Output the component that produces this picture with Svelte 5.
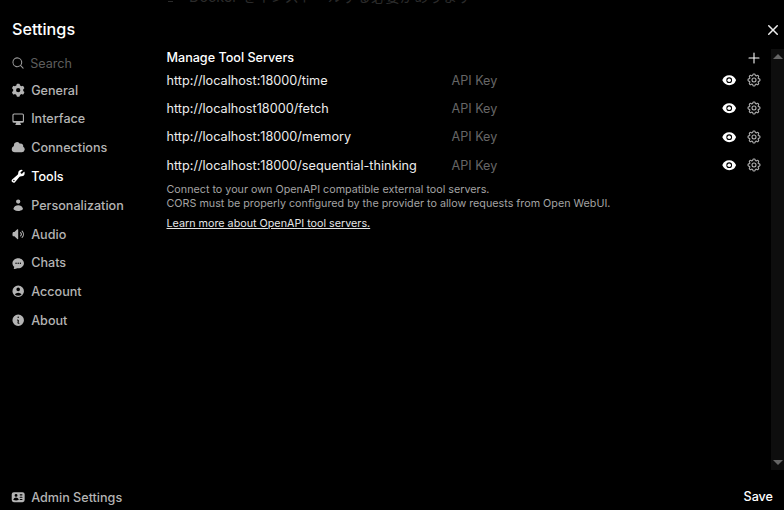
<script>
	const gear = 'M7.84 1.804A1 1 0 0 1 8.82 1h2.36a1 1 0 0 1 .98.804l.331 1.652a6.993 6.993 0 0 1 1.929 1.115l1.598-.54a1 1 0 0 1 1.186.447l1.18 2.044a1 1 0 0 1-.205 1.251l-1.267 1.113a7.047 7.047 0 0 1 0 2.228l1.267 1.113a1 1 0 0 1 .206 1.25l-1.18 2.045a1 1 0 0 1-1.187.447l-1.598-.54a6.993 6.993 0 0 1-1.929 1.115l-.33 1.652a1 1 0 0 1-.98.804H8.82a1 1 0 0 1-.98-.804l-.331-1.652a6.993 6.993 0 0 1-1.929-1.115l-1.598.54a1 1 0 0 1-1.186-.447l-1.18-2.044a1 1 0 0 1 .205-1.251l1.267-1.114a7.05 7.05 0 0 1 0-2.227L1.821 7.773a1 1 0 0 1-.206-1.25l1.18-2.045a1 1 0 0 1 1.187-.447l1.598.54A6.992 6.992 0 0 1 7.51 3.456l.33-1.652ZM10 13a3 3 0 1 0 0-6 3 3 0 0 0 0 6Z';

	const tabs = [
		{ label: 'General', d: gear },
		{ label: 'Interface', d: 'M2 4.25A2.25 2.25 0 0 1 4.25 2h11.5A2.25 2.25 0 0 1 18 4.25v8.5A2.25 2.25 0 0 1 15.75 15h-3.105a3.501 3.501 0 0 0 1.1 1.677A.75.75 0 0 1 13.26 18H6.74a.75.75 0 0 1-.484-1.323A3.501 3.501 0 0 0 7.355 15H4.25A2.25 2.25 0 0 1 2 12.75v-8.5Zm1.5 0a.75.75 0 0 1 .75-.75h11.5a.75.75 0 0 1 .75.75v7.5a.75.75 0 0 1-.75.75H4.25a.75.75 0 0 1-.75-.75v-7.5Z' },
		{ label: 'Connections', d: 'M1 12.5A4.5 4.5 0 0 0 5.5 17H15a4 4 0 0 0 1.866-7.539 3.504 3.504 0 0 0-4.504-4.272A4.5 4.5 0 0 0 4.06 8.235 4.502 4.502 0 0 0 1 12.5Z' },
		{ label: 'Tools', active: true, d: 'M19 5.5a4.5 4.5 0 0 1-4.791 4.49c-.873-.055-1.808.128-2.368.8l-6.024 7.23a2.724 2.724 0 1 1-3.837-3.837L9.21 8.16c.672-.56.855-1.495.8-2.368a4.5 4.5 0 0 1 5.873-4.575c.324.105.39.51.15.752L13.34 4.66a.455.455 0 0 0-.11.494 3.01 3.01 0 0 0 1.617 1.617c.17.07.363.02.493-.111l2.692-2.692c.241-.241.647-.174.752.15.14.435.216.9.216 1.382ZM4 17a1 1 0 1 0 0-2 1 1 0 0 0 0 2Z' },
		{ label: 'Personalization', d: 'M10 8a3 3 0 1 0 0-6 3 3 0 0 0 0 6ZM3.465 14.493a1.23 1.23 0 0 0 .41 1.412A9.957 9.957 0 0 0 10 18c2.31 0 4.438-.784 6.125-2.095a1.23 1.23 0 0 0 .41-1.412A7 7 0 0 0 10 10a7 7 0 0 0-6.535 4.493Z' },
		{ label: 'Audio', d: 'M10 3.75a.75.75 0 0 0-1.264-.546L4.703 7H3.167a.75.75 0 0 0-.7.48A6.985 6.985 0 0 0 2 10c0 .887.165 1.737.468 2.52.111.29.39.48.7.48h1.535l4.033 3.796A.75.75 0 0 0 10 16.25V3.75ZM15.95 5.05a.75.75 0 0 0-1.06 1.061 5.5 5.5 0 0 1 0 7.778.75.75 0 0 0 1.06 1.06 7 7 0 0 0 0-9.899ZM13.829 7.172a.75.75 0 0 0-1.061 1.06 2.5 2.5 0 0 1 0 3.536.75.75 0 0 0 1.06 1.06 4 4 0 0 0 0-5.656Z' },
		{ label: 'Chats', d: 'M10 3c-4.31 0-8 3.033-8 7 0 2.024.978 3.825 2.499 5.085a3.478 3.478 0 0 1-.522 1.756.75.75 0 0 0 .584 1.143 5.976 5.976 0 0 0 3.936-1.108c.487.082.99.124 1.503.124 4.31 0 8-3.033 8-7s-3.69-7-8-7Zm0 8a1 1 0 1 0 0-2 1 1 0 0 0 0 2Zm-2-1a1 1 0 1 1-2 0 1 1 0 0 1 2 0Zm5 1a1 1 0 1 0 0-2 1 1 0 0 0 0 2Z' },
		{ label: 'Account', d: 'M18 10a8 8 0 1 1-16 0 8 8 0 0 1 16 0Zm-5.5-2.5a2.5 2.5 0 1 1-5 0 2.5 2.5 0 0 1 5 0ZM10 12a5.99 5.99 0 0 0-4.793 2.39A6.483 6.483 0 0 0 10 16.5a6.483 6.483 0 0 0 4.793-2.11A5.99 5.99 0 0 0 10 12Z' },
		{ label: 'About', d: 'M18 10a8 8 0 1 1-16 0 8 8 0 0 1 16 0Zm-7-4a1 1 0 1 1-2 0 1 1 0 0 1 2 0ZM9 9a.75.75 0 0 0 0 1.5h.253a.25.25 0 0 1 .244.304l-.459 2.066A1.75 1.75 0 0 0 10.747 15H11a.75.75 0 0 0 0-1.5h-.253a.25.25 0 0 1-.244-.304l.459-2.066A1.75 1.75 0 0 0 9.253 9H9Z' }
	];

	const admin = 'M1 6a3 3 0 0 1 3-3h12a3 3 0 0 1 3 3v8a3 3 0 0 1-3 3H4a3 3 0 0 1-3-3V6Zm4 1.5a2 2 0 1 1 4 0 2 2 0 0 1-4 0Zm2 3a4 4 0 0 0-3.665 2.395.75.75 0 0 0 .416 1A8.98 8.98 0 0 0 7 14.5a8.98 8.98 0 0 0 3.249-.604.75.75 0 0 0 .416-1.001A4.001 4.001 0 0 0 7 10.5Zm5-3.75a.75.75 0 0 1 .75-.75h2.5a.75.75 0 0 1 0 1.5h-2.5a.75.75 0 0 1-.75-.75Zm0 6.5a.75.75 0 0 1 .75-.75h2.5a.75.75 0 0 1 0 1.5h-2.5a.75.75 0 0 1-.75-.75Zm.75-4a.75.75 0 0 0 0 1.5h2.5a.75.75 0 0 0 0-1.5h-2.5Z';

	const servers = [
		'http://localhost:18000/time',
		'http://localhost18000/fetch',
		'http://localhost:18000/memory',
		'http://localhost:18000/sequential-thinking'
	];
</script>

<div class="modal">
	<!-- page behind the modal, barely visible at the top edge -->
	<div class="behind"><span></span>Docker をインストールする必要があります</div>

	<header>
		<h1>Settings</h1>
		<button class="close" aria-label="Close">
			<svg viewBox="0 0 20 20" width="20" height="20" fill="currentColor"><path d="M6.28 5.22a.75.75 0 0 0-1.06 1.06L8.94 10l-3.72 3.72a.75.75 0 1 0 1.06 1.06L10 11.06l3.72 3.72a.75.75 0 1 0 1.06-1.06L11.06 10l3.72-3.72a.75.75 0 0 0-1.06-1.06L10 8.94 6.28 5.22Z" /></svg>
		</button>
	</header>

	<div class="body">
		<aside>
			<div>
				<div class="search">
					<svg viewBox="0 0 20 20" width="14" height="14" fill="currentColor"><path fill-rule="evenodd" clip-rule="evenodd" d="M9 3.5a5.5 5.5 0 1 0 0 11 5.5 5.5 0 0 0 0-11ZM2 9a7 7 0 1 1 12.452 4.391l3.328 3.329a.75.75 0 1 1-1.06 1.06l-3.329-3.328A7 7 0 0 1 2 9Z" /></svg>
					<span>Search</span>
				</div>
				<nav>
					{#each tabs as tab}
						<button class="tab" class:active={tab.active}>
							<svg viewBox="0 0 20 20" width="14.4" height="14.4" fill="currentColor"><path fill-rule="evenodd" clip-rule="evenodd" d={tab.d} /></svg>
							{tab.label}
						</button>
					{/each}
				</nav>
			</div>
			<button class="tab admin">
				<svg viewBox="0 0 20 20" width="14.4" height="14.4" fill="currentColor"><path fill-rule="evenodd" clip-rule="evenodd" d={admin} /></svg>
				Admin Settings
			</button>
		</aside>

		<main>
			<div class="panel">
				<div class="content">
					<div class="title-row">
						<h2>Manage Tool Servers</h2>
						<button class="add" aria-label="Add server">
							<svg viewBox="0 0 24 24" width="16" height="16" fill="none" stroke="currentColor" stroke-width="1.6" stroke-linecap="round"><path d="M12 4.5v15m7.5-7.5h-15" /></svg>
						</button>
					</div>
					<div class="servers">
						{#each servers as url}
							<div class="server">
								<span class="url">{url}</span>
								<span class="key">API Key</span>
								<svg class="eye" viewBox="0 0 20 20" width="14.4" height="14.4" fill="currentColor"><path d="M10 12.5a2.5 2.5 0 1 0 0-5 2.5 2.5 0 0 0 0 5Z" /><path fill-rule="evenodd" clip-rule="evenodd" d="M.664 10.59a1.651 1.651 0 0 1 0-1.186A10.004 10.004 0 0 1 10 3c4.257 0 7.893 2.66 9.336 6.41.147.381.146.804 0 1.186A10.004 10.004 0 0 1 10 17c-4.257 0-7.893-2.66-9.336-6.41ZM14 10a4 4 0 1 1-8 0 4 4 0 0 1 8 0Z" /></svg>
								<svg class="cog" viewBox="0 0 24 24" width="16" height="16" fill="none" stroke="currentColor" stroke-width="1.6" stroke-linecap="round" stroke-linejoin="round"><path d="M10.343 3.94c.09-.542.56-.94 1.11-.94h1.093c.55 0 1.02.398 1.11.94l.149.894c.07.424.384.764.78.93.398.164.855.142 1.205-.108l.737-.527a1.125 1.125 0 0 1 1.45.12l.773.774c.39.389.44 1.002.12 1.45l-.527.737c-.25.35-.272.806-.107 1.204.165.397.505.71.93.78l.893.15c.543.09.94.559.94 1.109v1.094c0 .55-.397 1.02-.94 1.11l-.894.149c-.424.07-.764.383-.929.78-.165.398-.143.854.107 1.204l.527.738c.32.447.269 1.06-.12 1.45l-.774.773a1.125 1.125 0 0 1-1.449.12l-.738-.527c-.35-.25-.806-.272-1.203-.107-.398.165-.71.505-.781.929l-.149.894c-.09.542-.56.94-1.11.94h-1.094c-.55 0-1.019-.398-1.11-.94l-.148-.894c-.071-.424-.384-.764-.781-.93-.398-.164-.854-.142-1.204.108l-.738.527c-.447.32-1.06.269-1.45-.12l-.773-.774a1.125 1.125 0 0 1-.12-1.45l.527-.737c.25-.35.272-.806.108-1.204-.165-.397-.506-.71-.93-.78l-.894-.15c-.542-.09-.94-.56-.94-1.109v-1.094c0-.55.398-1.02.94-1.11l.894-.149c.424-.07.765-.383.93-.78.165-.398.143-.854-.108-1.204l-.526-.738a1.125 1.125 0 0 1 .12-1.45l.773-.773a1.125 1.125 0 0 1 1.45-.12l.737.527c.35.25.807.272 1.204.107.397-.165.71-.505.78-.929l.15-.894Z" /><path d="M15 12a3 3 0 1 1-6 0 3 3 0 0 1 6 0Z" /></svg>
							</div>
						{/each}
					</div>
					<p class="note">
						Connect to your own OpenAPI compatible external tool servers.<br />
						CORS must be properly configured by the provider to allow requests from Open WebUI.
					</p>
					<a href="#top" class="learn">Learn more about OpenAPI tool servers.</a>
				</div>
				<div class="scrollbar">
					<span class="arrow up"></span>
					<span class="arrow down"></span>
				</div>
			</div>
			<div class="actions">
				<button class="save">Save</button>
			</div>
		</main>
	</div>
</div>

<style>
	:global(body) {
		background: #000;
	}

	.modal {
		position: relative;
		width: 784px;
		height: 510px;
		display: flex;
		flex-direction: column;
		overflow: hidden;
		background: #000;
		color: #fff;
		font-family: Inter, 'Noto Sans CJK JP', sans-serif;
	}

	button {
		background: none;
		border: none;
		padding: 0;
		color: inherit;
		font: inherit;
	}

	.behind {
		position: absolute;
		top: -13px;
		left: 168px;
		font-size: 14.4px;
		line-height: 20px;
		color: #2b2b2b;
		white-space: nowrap;
	}

	.behind span {
		display: inline-block;
		width: 5px;
		height: 1px;
		margin-right: 16px;
		background: #2b2b2b;
	}

	header {
		height: 49px;
		flex-shrink: 0;
		display: flex;
		align-items: center;
		justify-content: space-between;
		padding: 8px 1px 0 12px;
		box-sizing: border-box;
	}

	h1 {
		margin: 0;
		font-size: 16.2px;
		font-weight: 500;
	}

	.close {
		display: flex;
		margin-top: 3px;
		color: #eee;
	}

	.body {
		flex: 1;
		min-height: 0;
		display: flex;
	}

	aside {
		width: 166.5px;
		flex-shrink: 0;
		display: flex;
		flex-direction: column;
		justify-content: space-between;
		padding: 5px 0 4px 10.8px;
		box-sizing: border-box;
	}

	.search {
		display: flex;
		align-items: center;
		gap: 5.4px;
		height: 18px;
		margin-bottom: 3.7px;
		font-size: 12.6px;
		color: #9a9a9a;
	}

	.search span {
		color: #5d5d5d;
	}

	.tab {
		display: flex;
		align-items: center;
		gap: 6px;
		width: 100%;
		height: 28.8px;
		font-size: 12.6px;
		font-weight: 500;
		color: #b4b4b4;
		text-align: left;
	}

	.tab.active {
		color: #fff;
	}

	.admin {
		height: 18px;
	}

	main {
		flex: 1;
		min-width: 0;
		display: flex;
		flex-direction: column;
	}

	.panel {
		flex: 1;
		min-height: 0;
		display: flex;
	}

	.content {
		flex: 1;
		min-width: 0;
		font-size: 12.6px;
	}

	.title-row {
		display: flex;
		align-items: center;
		justify-content: space-between;
		height: 17px;
		padding-right: 9px;
	}

	h2 {
		margin: 0;
		font-size: 12.6px;
		font-weight: 500;
	}

	.add {
		display: flex;
	}

	.server {
		display: flex;
		align-items: center;
		height: 28.33px;
		padding-right: 9px;
	}

	.url {
		width: 285px;
		font-size: 12.68px;
		color: #ececec;
	}

	.key {
		flex: 1;
		color: #666;
	}

	.eye {
		color: #fff;
		margin-right: 10px;
	}

	.cog {
		color: #b4b4b4;
	}

	.note {
		margin: 3.6px 0 0;
		font-size: 10.76px;
		line-height: 14px;
		color: #a3a3a3;
	}

	.learn {
		display: inline-block;
		margin-top: 6.4px;
		font-size: 10.76px;
		line-height: 14px;
		color: #e5e5e5;
	}

	.scrollbar {
		width: 13px;
		flex-shrink: 0;
		background: #0e0e0e;
		display: flex;
		flex-direction: column;
		justify-content: space-between;
		align-items: center;
		padding: 5px 0;
		box-sizing: border-box;
	}

	.arrow {
		width: 0;
		height: 0;
		border-left: 5px solid transparent;
		border-right: 5px solid transparent;
	}

	.up {
		border-bottom: 5px solid #666;
	}

	.down {
		border-top: 5px solid #666;
	}

	.actions {
		height: 40px;
		flex-shrink: 0;
		display: flex;
		align-items: flex-end;
		justify-content: flex-end;
		padding: 0 11px 5px 0;
		box-sizing: border-box;
	}

	.save {
		font-size: 12.6px;
		font-weight: 500;
		line-height: 16px;
	}
</style>
